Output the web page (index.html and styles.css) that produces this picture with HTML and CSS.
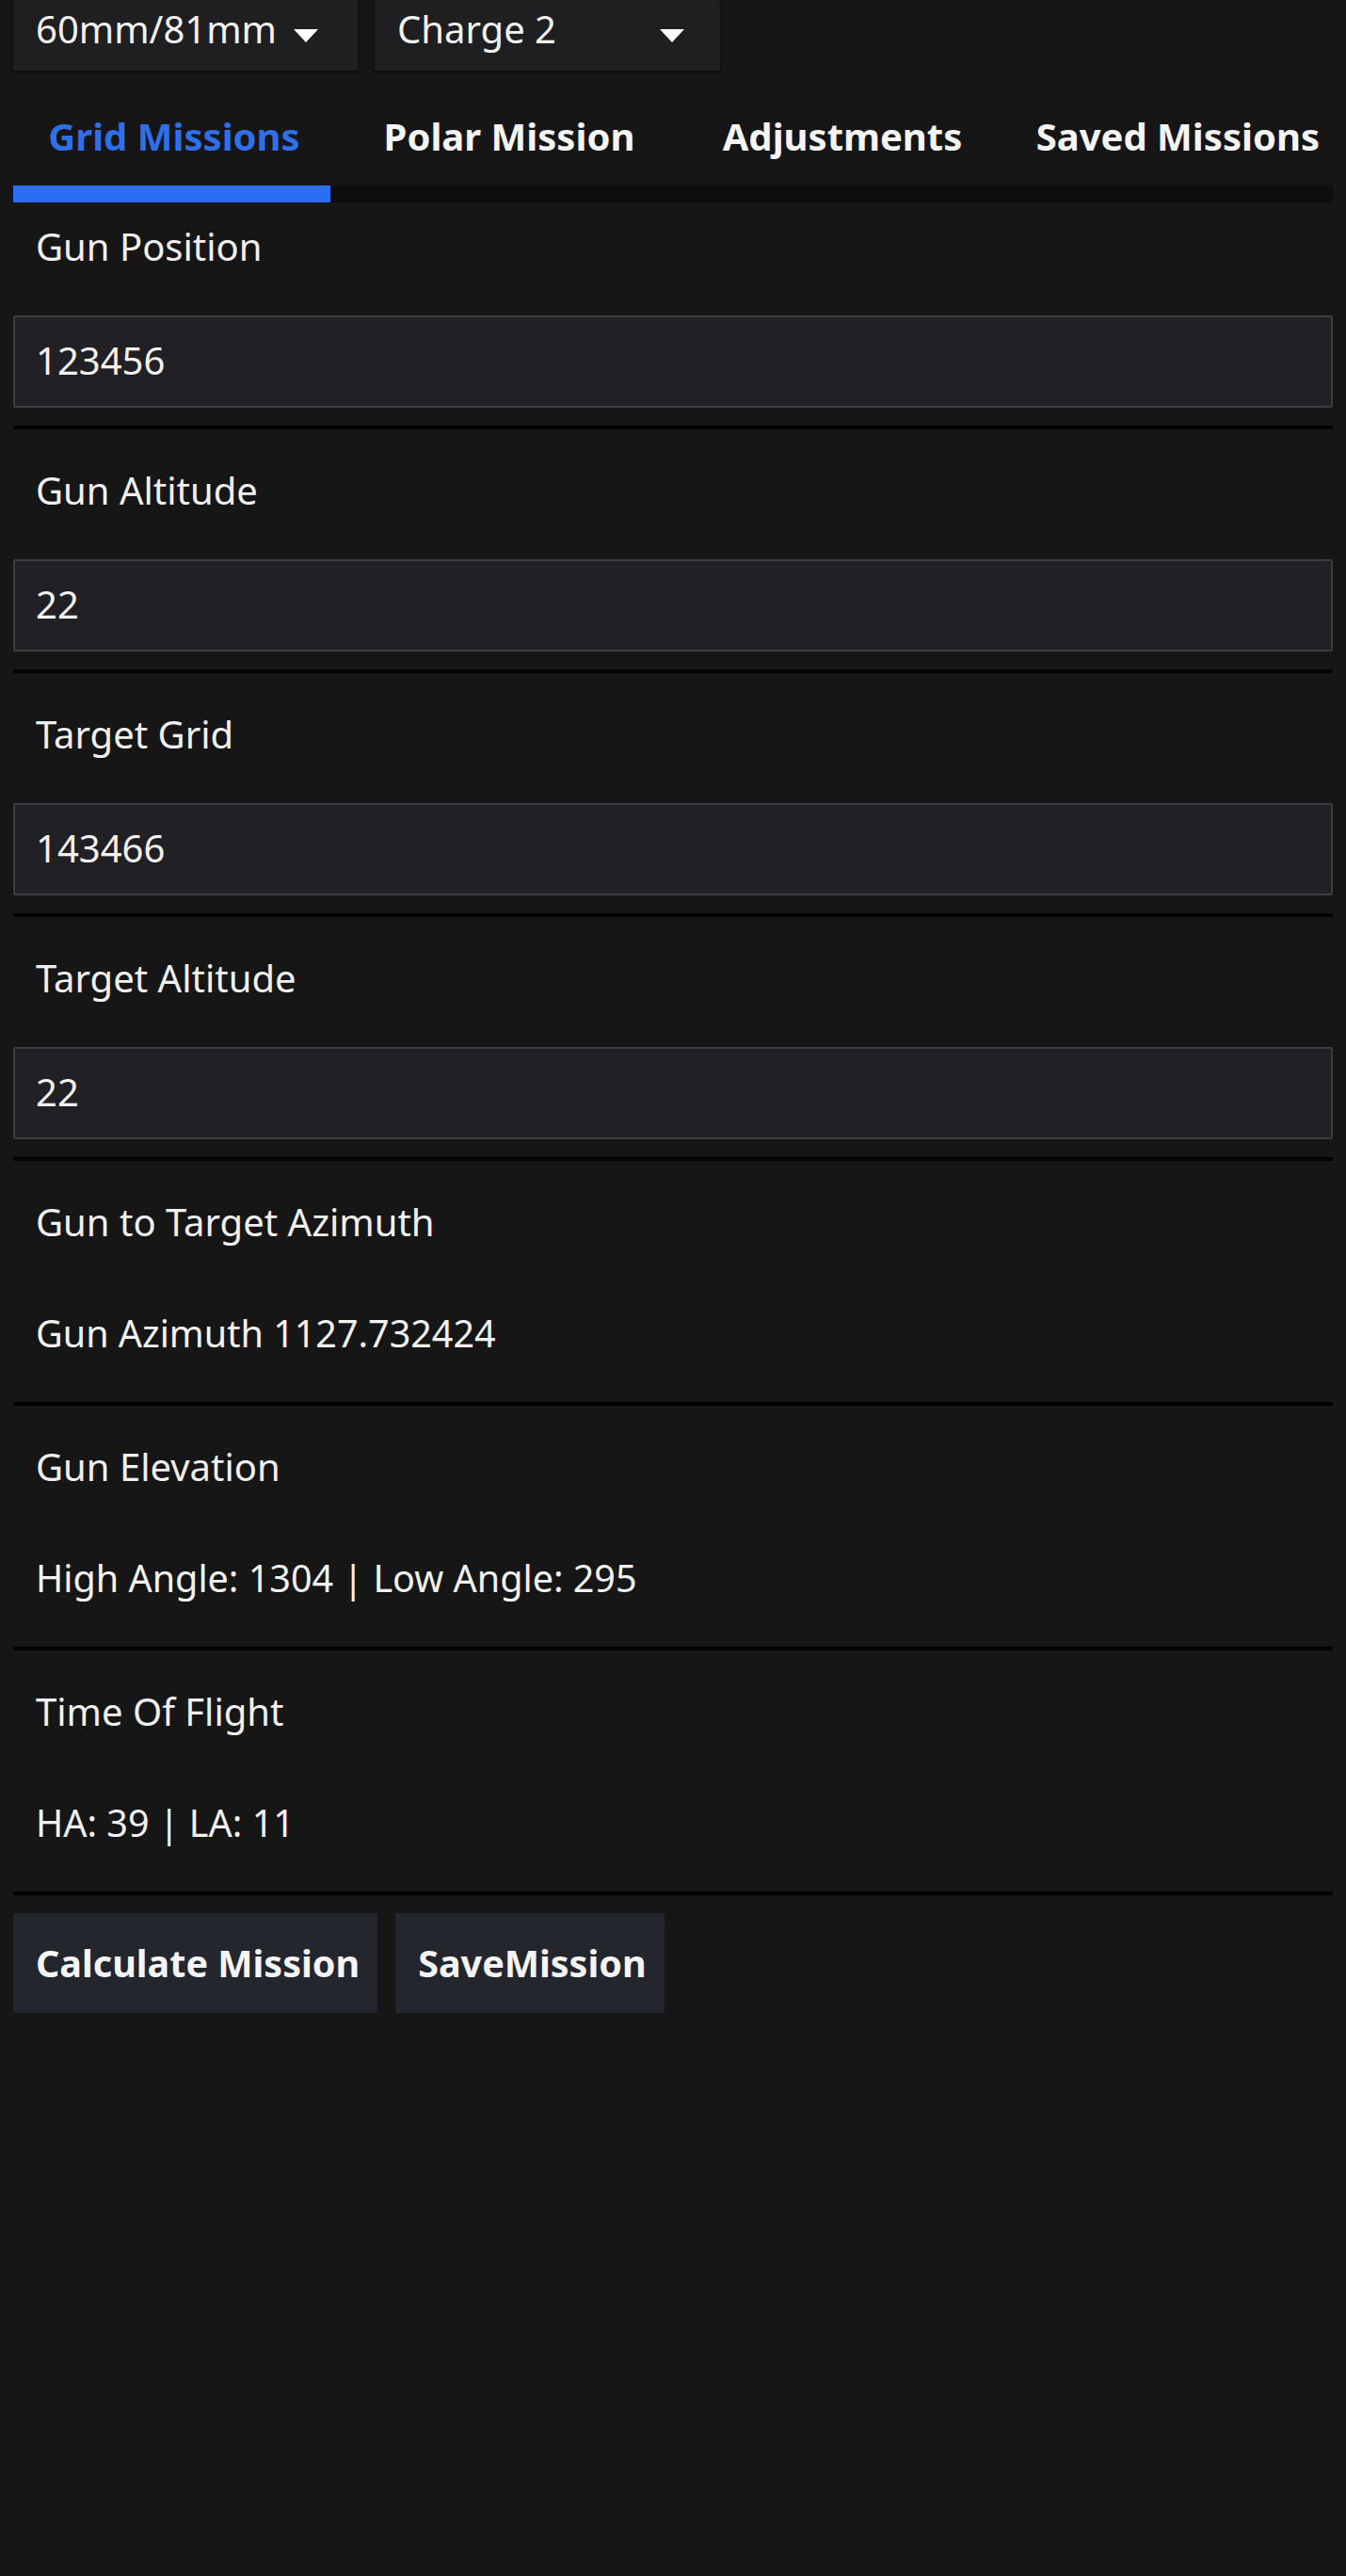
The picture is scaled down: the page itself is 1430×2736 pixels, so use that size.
FILE: index.html
```html
<!DOCTYPE html>
<html lang="en">
<head>
<meta charset="utf-8">
<title>Mortar Calculator</title>
<link rel="stylesheet" href="styles.css">
</head>
<body>
<div class="page">
  <div class="selects">
    <div class="select"><span>60mm/81mm</span><span class="caret"></span></div>
    <div class="select"><span>Charge 2</span><span class="caret"></span></div>
  </div>

  <nav class="tabs">
    <div class="tab active">Grid Missions</div>
    <div class="tab">Polar Mission</div>
    <div class="tab">Adjustments</div>
    <div class="tab last">Saved Missions</div>
  </nav>
  <div class="track"><div class="indicator"></div></div>

  <section class="field first">
    <label class="label">Gun Position</label>
    <div class="input">123456</div>
  </section>
  <section class="field">
    <label class="label">Gun Altitude</label>
    <div class="input">22</div>
  </section>
  <section class="field">
    <label class="label">Target Grid</label>
    <div class="input">143466</div>
  </section>
  <section class="field">
    <label class="label">Target Altitude</label>
    <div class="input">22</div>
  </section>

  <section class="output">
    <div class="label">Gun to Target Azimuth</div>
    <div class="value">Gun Azimuth 1127.732424</div>
  </section>
  <section class="output">
    <div class="label">Gun Elevation</div>
    <div class="value">High Angle: 1304 | Low Angle: 295</div>
  </section>
  <section class="output">
    <div class="label">Time Of Flight</div>
    <div class="value">HA: 39 | LA: 11</div>
  </section>

  <div class="actions">
    <button class="btn">Calculate Mission</button>
    <button class="btn">SaveMission</button>
  </div>
</div>
</body>
</html>
```

FILE: styles.css
```css
html, body {
  margin: 0;
  padding: 0;
  background: #161617;
}
body {
  font-family: "Noto Sans", "Open Sans", sans-serif;
  color: #f2f2f2;
  font-size: 40px;
}
.page {
  padding: 0 14px;
  min-height: 2736px;
  box-sizing: border-box;
}
.selects {
  display: flex;
  gap: 18px;
}
.select {
  width: 366px;
  height: 75px;
  box-sizing: border-box;
  background: #1f1f21;
  box-shadow: 0 2px 3px rgba(0, 0, 0, 0.6);
  display: flex;
  align-items: flex-start;
  justify-content: space-between;
  padding: 3px 42px 0 24px;
  line-height: 56px;
}
.select:nth-child(2) {
  width: 367px;
  padding-right: 38px;
}
.caret {
  width: 0;
  height: 0;
  margin-top: 28px;
  border-left: 13px solid transparent;
  border-right: 13px solid transparent;
  border-top: 14px solid #ffffff;
}
.tabs {
  display: grid;
  grid-template-columns: 342px 370px 338px 1fr;
  height: 122px;
}
.tab {
  text-align: center;
  font-weight: 700;
  font-size: 40px;
  line-height: 54px;
  padding-top: 43px;
  color: #f4f4f4;
  white-space: nowrap;
}
.tab.last {
  text-align: right;
  padding-right: 14px;
}
.tab.active {
  color: #2f6fe8;
}
.track {
  height: 18px;
  background: #0e0e0e;
}
.indicator {
  width: 337px;
  height: 100%;
  background: #2b6ef1;
}
.field, .output {
  border-bottom: 4px solid #020202;
}
.label {
  display: block;
  margin-top: 38px;
  padding-left: 24px;
  line-height: 54px;
  color: #f0f0f0;
}
.field.first .label {
  margin-top: 20px;
}
.input {
  margin-top: 46px;
  margin-bottom: 19px;
  height: 98px;
  box-sizing: border-box;
  background: #212125;
  border: 2px solid #3d3d41;
  border-radius: 2px;
  padding-left: 22px;
  line-height: 92px;
  color: #f2f2f2;
}
.value {
  margin-top: 64px;
  margin-bottom: 46px;
  padding-left: 24px;
  line-height: 54px;
  font-size: 39.5px;
  color: #f2f2f2;
}
.actions {
  display: flex;
  gap: 19px;
  margin-top: 19px;
}
.btn {
  font-family: "Noto Sans", "Open Sans", sans-serif;
  font-weight: 700;
  font-size: 39.5px;
  color: #f4f4f6;
  background: #24262d;
  border: none;
  border-radius: 2px;
  height: 106px;
  padding: 0 19px 0 24px;
  cursor: pointer;
}
```
